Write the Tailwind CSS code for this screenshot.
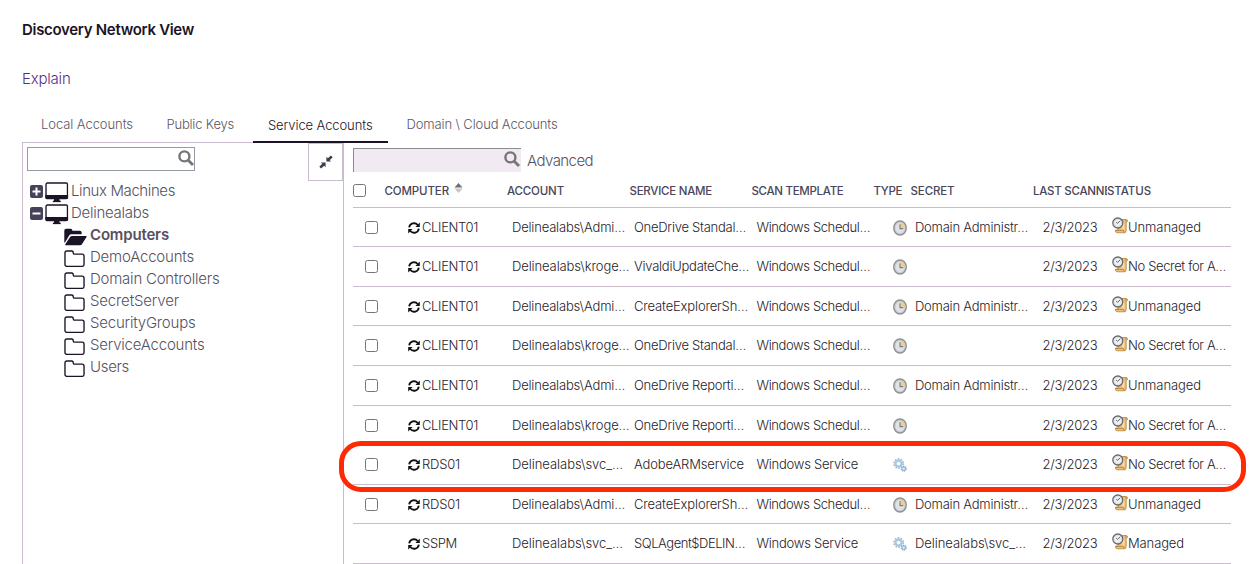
<!DOCTYPE html>
<html lang="en">
<head>
<meta charset="utf-8">
<title>Discovery Network View</title>
<script src="https://cdn.jsdelivr.net/npm/@tailwindcss/browser@4"></script>
</head>
<body class="bg-white">
<svg class="hidden">
  <symbol id="search" viewBox="0 0 16 16"><circle cx="6.4" cy="6.4" r="5" fill="none" stroke="#757575" stroke-width="2.4"/><path d="M10.2 10.2L15 15" stroke="#757575" stroke-width="2.8"/></symbol>
  <symbol id="monitor" viewBox="0 0 24 21"><rect x="1" y="1" width="22" height="16" rx="1.5" fill="#fff" stroke="#1b1426" stroke-width="1.4"/><path d="M.3 13.2h23.4v2.6q0 1.6-1.6 1.6H1.9Q.3 17.4 .3 15.8zM9.500 17h5l.6 2.300h1v1.400H8v-1.400h1z" fill="#1b1426"/></symbol>
  <symbol id="folder" viewBox="0 0 22 18" preserveAspectRatio="none"><path d="M1 3Q1 1 3 1h4.800Q9.500 1 9.500 3q0 1.300 1.300 1.300h7.700q2 0 2 2V14.800q0 2-2 2H3q-2 0-2-2z" fill="none" stroke="#1b1426" stroke-width="1.400"/></symbol>
  <symbol id="open" viewBox="0 0 24 18"><path d="M.3 14.500V2.500Q.3.600 2.200.600h4.600q1.800 0 1.800 1.900h7.500q1.900 0 1.900 1.900v1.800H7.600q-1.500 0-2.300 1.200L1 14.500z" fill="#1b1426"/><path d="M1.300 16.300L6.200 9q.7-1 1.900-1h14.300q1.300 0 .6 1.100l-4.700 7.200q-.7 1.100-1.900 1.100H2q-1.200 0-.7-1.100z" fill="#1b1426"/></symbol>
  <symbol id="sync" viewBox="0 0 12 12"><path d="M1.200 5.400A4.800 4.600 0 0 1 9.700 3M10.800 6.600A4.800 4.600 0 0 1 2.300 9" fill="none" stroke="#111" stroke-width="1.800"/><path d="M11.800.6v4.400H7.400zM.2 11.400V7H4.600z" fill="#111"/></symbol>
  <symbol id="clock" viewBox="0 0 14 16"><ellipse cx="7" cy="8" rx="6.200" ry="6.900" fill="#d4d7da" stroke="#8f9296" stroke-width="1.500"/><ellipse cx="7" cy="8" rx="4.900" ry="5.600" fill="#dfe3e8" stroke="#c3c6c9" stroke-width=".7"/><path d="M7 8.600V2.800Q11.500 3.300 11.800 8.600z" fill="#f6cd87"/><path d="M7 4.200V8.600h3.200" fill="none" stroke="#75808f" stroke-width="1.100"/></symbol>
  <symbol id="gears" viewBox="0 0 15 15"><circle cx="6" cy="6" r="5" fill="none" stroke="#9fbdda" stroke-width="1.800" stroke-dasharray="1.700 1.440"/><circle cx="6" cy="6" r="3.600" fill="#fff" stroke="#a9c8e5" stroke-width="1.900"/><circle cx="6" cy="6" r="2.400" fill="none" stroke="#7d9dbc" stroke-width=".5"/><circle cx="11.500" cy="11.500" r="2.300" fill="#fff" stroke="#86a9ca" stroke-width="1.900" stroke-dasharray="1.300 .5"/><circle cx="11.500" cy="11.500" r="1.500" fill="#e6f0f8" stroke="#9fbdda"/></symbol>
  <symbol id="status" viewBox="0 0 16 17"><path d="M6 2.500h8.300q1.500.2 1.200 1.900l-1.300.5v8.700q0 2.200-2 2.200H5q-2-.4-1.500-2.600H6z" fill="#eec07a" stroke="#a9752c" stroke-width=".7"/><path d="M3.700 13.400h7.800q.2 2 1.200 2.200M13.800 4.700V2.900" fill="none" stroke="#a9752c" stroke-width=".7"/><path d="M11.300 5.500V12.500" stroke="#f8dfae" stroke-width="2"/><circle cx="5.800" cy="6" r="5" fill="#eef1f4" stroke="#666a6e" stroke-width="1.300"/><path d="M5.600 6.300L8.200 3.800M5.600 6.300L4.200 5.200" stroke="#555" stroke-width=".9"/><circle cx="5.800" cy="6" r="3.600" fill="none" stroke="#a8acb0" stroke-width=".6" stroke-dasharray=".7 1.200"/></symbol>
</svg>

<div class="relative h-[564px] w-[1251px] overflow-hidden bg-white font-['Inter',sans-serif] font-light text-[#3f3b4b] whitespace-nowrap">
  <header class="flex h-[107px] flex-col pl-[22px]">
    <h1 class="mt-[20px] h-5 text-[15px]/5 font-semibold text-[#1b1426]"><span data-w="172">Discovery Network View</span></h1>
    <a class="mt-[29px] h-5 text-[15px]/5 text-[#5b2d82]"><span data-w="48.500">Explain</span></a>
  </header>
  <nav class="flex h-[36px] pl-[22px] text-[13px]/[18px] text-[#5a5664]">
    <div class="w-[126px] pt-[8px] pl-[19px]"><span data-w="92">Local Accounts</span></div>
    <div class="w-[105px] pt-[8px] pl-[18.500px]"><span data-w="67.500">Public Keys</span></div>
    <div class="z-10 w-[135px] border-b-2 border-[#1b1426] pt-[9px] pl-[15px] text-[#1b1426]"><span data-w="104.500">Service Accounts</span></div>
    <div class="pt-[8px] pl-[18.500px]"><span data-w="151">Domain \ Cloud Accounts</span></div>
  </nav>
  <main class="-mt-px flex h-[422px] pl-[22px]">
    <aside class="flex w-[322px] justify-between border-t border-r border-l border-[#c9bdcd]">
      <div class="pt-[4px] pl-[4px]">
        <div class="flex h-6 w-[168px] justify-end border border-[#949ba3] pt-[2px]"><svg class="size-4"><use href="#search"/></svg></div>
        <div id="tree" class="mt-[9px] text-[15px]/[22px] text-[#55515f]"></div>
      </div>
      <div class="flex h-[38px] w-[35px] items-center justify-center border border-[#c9bdcd]">
        <svg class="size-[14px]" viewBox="0 0 14 14"><path d="M7.400 1.800V6.600h4.800L10.700 5.200 13.700 2.200 11.900.4 8.900 3.300zM6.600 12.200V7.400H1.800L3.300 8.800.3 11.800l1.800 1.800 3-2.900z" fill="#3f3b4b"/></svg>
      </div>
    </aside>
    <section class="w-[887px] pt-[6px] pl-[9px]">
      <div class="flex h-6">
        <div class="flex w-[168px] justify-end border-t border-l border-[#8d8d8d] bg-[#f1eaf2] pt-[2px] pr-px"><svg class="size-4"><use href="#search"/></svg></div>
        <span class="pt-[2px] pl-[6px] text-[15px]/[22px] text-[#55515f]"><span data-w="66">Advanced</span></span>
      </div>
      <div id="grid"></div>
    </section>
  </main>
  <div class="absolute top-[441px] left-[339px] z-20 h-[51px] w-[907px] rounded-[22px] border-[5px] border-[#ff2a04]"></div>
</div>

<script>
const fit = (t, w) => `<span data-w="${w}">${t}</span>`;
const box = '<i class="block size-[13px] rounded-[2.500px] border border-[#767676] bg-white"></i>';

const tree = [['Linux Machines',104,'+'],['Delinealabs',78,'-'],['Computers',79,'open'],['DemoAccounts',104,'folder'],['Domain Controllers',129.5,'folder'],['SecretServer',89,'folder'],['SecurityGroups',105.5,'folder'],['ServiceAccounts',114.5,'folder'],['Users',39,'folder']];
document.getElementById('tree').innerHTML = tree.map(([t, w, k]) => {
  if (k === '+' || k === '-') return `<div class="flex h-[22px] pl-[3px]">
    <svg class="mt-[5px] size-[13px]" viewBox="0 0 13 13"><rect width="13" height="13" rx="2" fill="#46425a"/><path d="${k === '+' ? 'M2.500 6.500h8M6.500 2.500v8' : 'M2.500 6.500h8'}" stroke="#fff" stroke-width="2"/></svg>
    <svg class="mt-[2px] ml-[2px] h-[20.500px] w-[23.500px] shrink-0"><use href="#monitor"/></svg><span class="ml-[2.500px]">${fit(t, w)}</span></div>`;
  return k === 'open'
    ? `<div class="flex h-[22px] pl-[37px] font-semibold"><svg class="mt-[3.500px] h-[18px] w-[23.500px]"><use href="#open"/></svg><span class="ml-[2.500px]">${fit(t, w)}</span></div>`
    : `<div class="flex h-[22px] pl-[37px]"><svg class="mt-[3.500px] h-[17.500px] w-[21.500px]"><use href="#folder"/></svg><span class="ml-[4.500px]">${fit(t, w)}</span></div>`;
}).join('');

const A = ['Delinealabs\\Admi…',113], K = ['Delinealabs\\kroge…',117.5], V = ['Delinealabs\\svc_…',111];
const WS = ['Windows Schedul…',113.5], WV = ['Windows Service',101.5], D = ['Domain Administr…',113], N = ['',0];
const U = ['Unmanaged',73], S = ['No Secret for A…',98], C = ['CLIENT01',56], R = ['RDS01',38];
const rows = [
  [C,A,['OneDrive Standal…',112],WS,'clock',D,U],
  [C,K,['VivaldiUpdateChe…',115],WS,'clock',N,S],
  [C,A,['CreateExplorerSh…',114],WS,'clock',D,U],
  [C,K,['OneDrive Standal…',112],WS,'clock',N,S],
  [C,A,['OneDrive Reporti…',110],WS,'clock',D,U],
  [C,K,['OneDrive Reporti…',110],WS,'clock',N,S],
  [R,V,['AdobeARMservice',110],WV,'gears',N,S],
  [R,A,['CreateExplorerSh…',114],WS,'clock',D,U],
  [['SSPM',35],V,['SQLAgent$DELIN…',111],WV,'gears',V,['Managed',56]]
];
const short = [0, 2, 5, 7];
document.getElementById('grid').innerHTML = `<div class="grid h-[36px] grid-cols-[32px_122px_123px_122px_122px_37px_122px_74px_124px] items-center border-b border-[#c9bdcd] pt-[5px] text-[11.500px] font-medium text-[#4a4658]">
  <div class="-mt-[4px]">${box}</div>
  <div class="-ml-[.5px] flex">${fit('COMPUTER',64.5)}<svg class="ml-[5px] h-[10px] w-[9px]" viewBox="0 0 9 10"><path d="M.5 4.500L4.500 0l4 4.500z" fill="#66707b"/><path d="M.5 5.500L4.500 10l4-4.500z" fill="#c5c5c5"/></svg></div>
  <div>${fit('ACCOUNT',57)}</div><div class="-ml-[.5px]">${fit('SERVICE NAME',82.5)}</div><div class="-ml-[.5px]">${fit('SCAN TEMPLATE',92)}</div><div class="-ml-[.5px]">${fit('TYPE',28.5)}</div><div class="-ml-[.5px]">${fit('SECRET',44)}</div>
  <div class="overflow-hidden">${fit('LAST SCANNED',86)}</div><div>${fit('STATUS',44)}</div></div>`
+ rows.map(([c, a, s, t, icon, sec, st], i) => `<div class="grid ${short.includes(i) ? 'h-[39px] pt-px' : 'h-[40px]'} grid-cols-[32px_122px_123px_122px_122px_37px_122px_74px_124px] items-center border-b border-[#c9bdcd] text-[13px] text-[#1f1b29]">
  <div class="pl-[12px]">${i < 8 ? box : ''}</div>
  <div class="flex items-center pl-[23px]"><svg class="mr-[2px] size-[12px]"><use href="#sync"/></svg>${fit(...c)}</div>
  <div class="pl-[5px]">${fit(...a)}</div><div class="pl-[4px]">${fit(...s)}</div><div class="pl-[4.500px]">${fit(...t)}</div>
  <div class="pl-[18.500px]"><svg class="${icon === 'clock' ? 'h-[16px] w-[14px]' : 'size-[14px]'}"><use href="#${icon}"/></svg></div>
  <div class="pl-[4px]">${fit(...sec)}</div><div class="pl-[9.500px]">${fit('2/3/2023',55)}</div>
  <div class="flex items-center pl-[5px]"><svg class="-mt-[4px] h-[17px] w-[16px]"><use href="#status"/></svg>${fit(...st)}</div></div>`).join('');

const spread = () => document.querySelectorAll('[data-w]').forEach(e => {
  e.style.letterSpacing = '0px';
  const n = [...e.textContent].length;
  if (n) e.style.letterSpacing = (e.dataset.w - e.getBoundingClientRect().width) / n + 'px';
});
spread();
addEventListener('load', () => { spread(); document.fonts.ready.then(spread); requestAnimationFrame(spread); });
</script>
</body>
</html>
